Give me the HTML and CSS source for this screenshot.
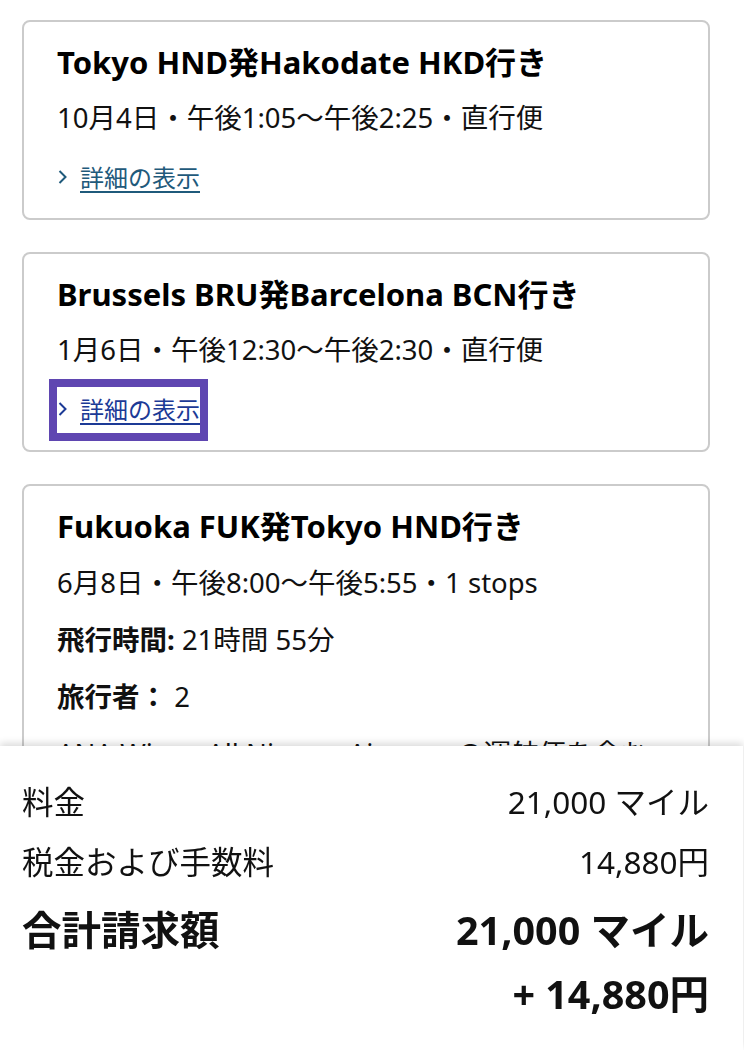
FILE: index.html
```html
<!DOCTYPE html>
<html lang="ja">
<head>
  <meta charset="UTF-8">
  <meta name="viewport" content="width=device-width, initial-scale=1.0">
  <title>旅程の確認</title>
  <link rel="stylesheet" href="styles.css">
</head>
<body>
  <main class="trip-list">
    <section class="trip-card">
      <h2 class="trip-title">Tokyo HND発Hakodate HKD行き</h2>
      <p class="trip-line">10月4日・午後1:05〜午後2:25・直行便</p>
      <a class="details-link" href="#">
        <svg class="chevron" viewBox="0 0 9 14" width="9" height="14"><polyline points="1.5,1 7.5,7 1.5,13"/></svg>
        <span class="details-text">詳細の表示</span>
      </a>
    </section>

    <section class="trip-card">
      <h2 class="trip-title">Brussels BRU発Barcelona BCN行き</h2>
      <p class="trip-line">1月6日・午後12:30〜午後2:30・直行便</p>
      <a class="details-link is-focused" href="#">
        <svg class="chevron" viewBox="0 0 9 14" width="9" height="14"><polyline points="1.5,1 7.5,7 1.5,13"/></svg>
        <span class="details-text">詳細の表示</span>
      </a>
    </section>

    <section class="trip-card trip-card-open">
      <h2 class="trip-title">Fukuoka FUK発Tokyo HND行き</h2>
      <p class="trip-line">6月8日・午後8:00〜午後5:55・1 stops</p>
      <p class="trip-line"><strong>飛行時間:</strong> 21時間 55分</p>
      <p class="trip-line"><strong>旅行者：</strong> 2</p>
      <p class="trip-line">ANA Wings All Nippon Airways の運航便を含む</p>
    </section>
  </main>

  <footer class="price-summary">
    <div class="summary-row">
      <span>料金</span>
      <span>21,000 マイル</span>
    </div>
    <div class="summary-row">
      <span>税金および手数料</span>
      <span>14,880円</span>
    </div>
    <div class="summary-row summary-total">
      <span>合計請求額</span>
      <span class="total-amount">
        <span>21,000 マイル</span>
        <span>+ 14,880円</span>
      </span>
    </div>
  </footer>
</body>
</html>
```

FILE: styles.css
```css
* {
  margin: 0;
  padding: 0;
  box-sizing: border-box;
}

html {
  overflow: hidden;
}

body {
  font-family: "Noto Sans", "Noto Sans CJK JP", sans-serif;
  color: #111;
  background: #fff;
  height: 100vh;
}

.trip-list {
  display: flex;
  flex-direction: column;
  gap: 32px;
  padding: 20px 34px 0 22px;
}

.trip-card {
  border: 2px solid #cbcbcb;
  border-radius: 8px;
  padding: 20px 20px 17px 33px;
  display: flex;
  flex-direction: column;
  align-items: flex-start;
  gap: 16px;
}

.trip-card-open {
  gap: 17px;
}

.trip-title {
  font-size: 31px;
  font-weight: 700;
  line-height: 40px;
  color: #000;
}

.trip-line {
  font-size: 27.5px;
  line-height: 40px;
  color: #111;
}

.trip-line strong {
  font-weight: 700;
}

.details-link {
  display: inline-flex;
  align-items: center;
  gap: 13px;
  height: 46px;
  margin-top: 1px;
  padding-left: 1px;
  color: #1f5a7b;
  text-decoration: none;
}

.details-link.is-focused {
  color: #1c3a96;
  outline: 8px solid #5f46b1;
}

.chevron {
  fill: none;
  stroke: currentColor;
  stroke-width: 2;
  margin-top: -2px;
}

.details-text {
  font-size: 24px;
  line-height: 32px;
  text-decoration: underline;
  text-decoration-thickness: 2px;
  text-underline-offset: 4px;
}

.price-summary {
  position: fixed;
  left: 0;
  right: 1px;
  bottom: 0;
  height: 304px;
  background: #fff;
  box-shadow: 0 -3px 7px rgba(0, 0, 0, 0.14);
  padding: 36px 34px 0 22px;
  display: flex;
  flex-direction: column;
  gap: 20px;
}

.summary-row {
  display: flex;
  justify-content: space-between;
  font-size: 31.5px;
  line-height: 40px;
}

.summary-total {
  margin-top: -4px;
  font-size: 39.5px;
  font-weight: 700;
  line-height: 64px;
}

.total-amount {
  display: flex;
  flex-direction: column;
  align-items: flex-end;
}
```
